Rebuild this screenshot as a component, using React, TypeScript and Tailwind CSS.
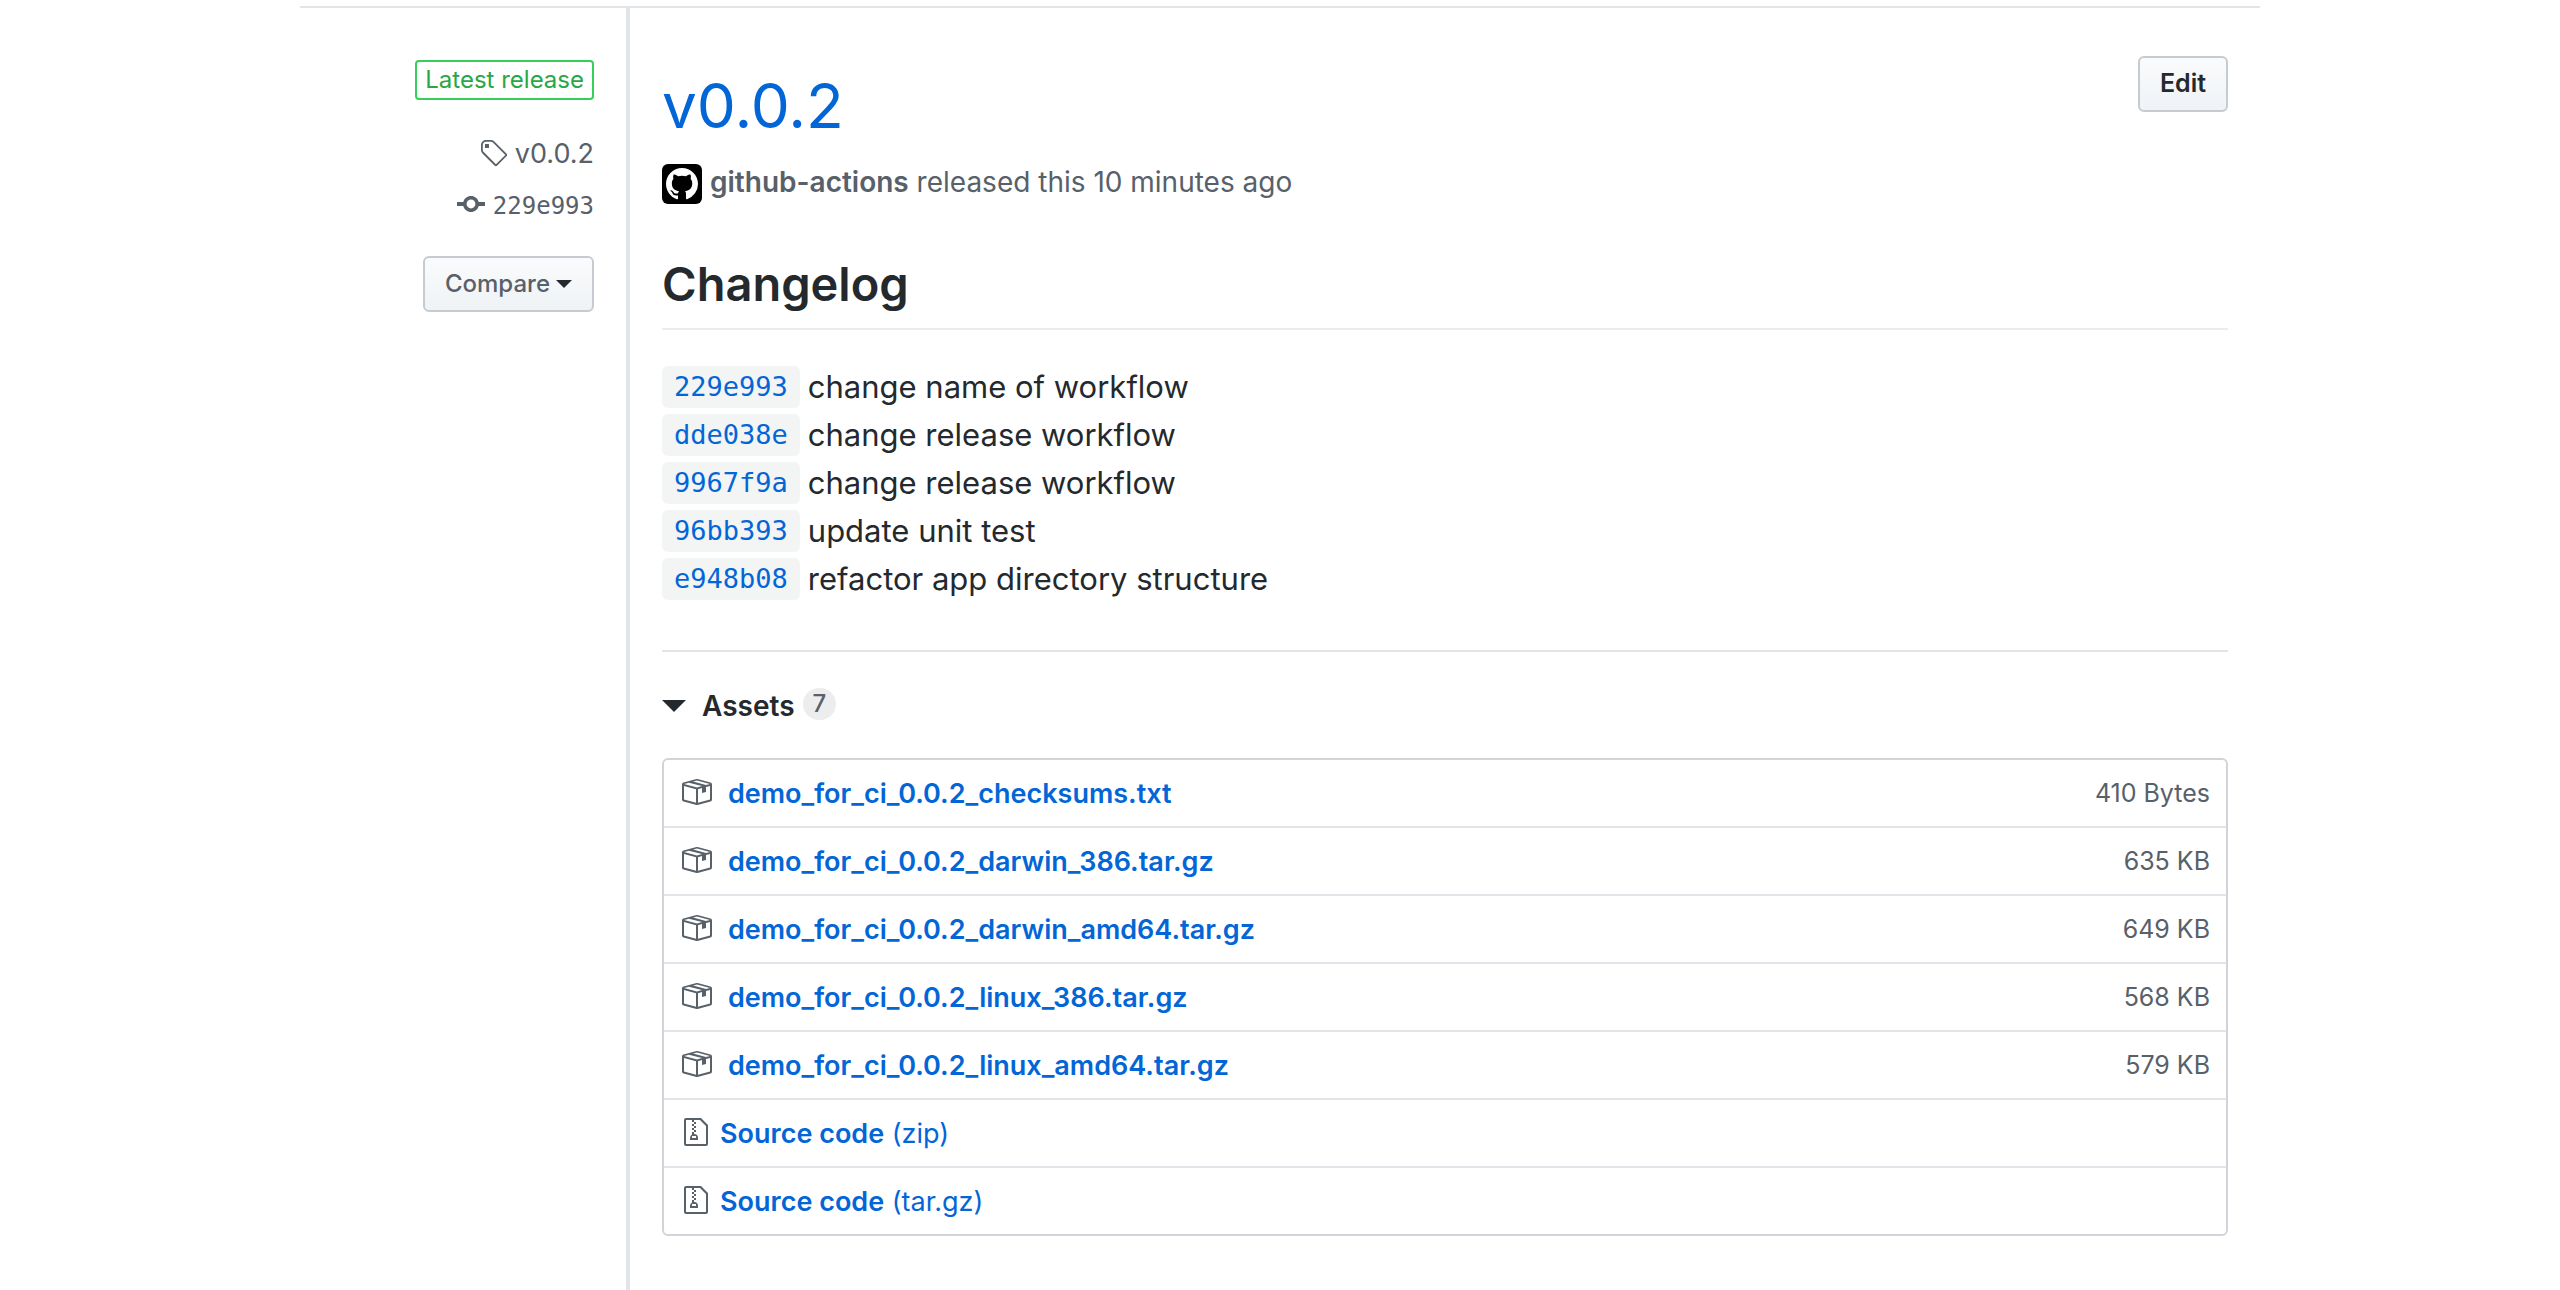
import { type ReactNode } from "react";

function Icon({ d, w, className }: { d: string; w: number; className: string }) {
  return (
    <svg viewBox={`0 0 ${w} 16`} fill="currentColor" aria-hidden="true" className={className}>
      <path fillRule="evenodd" d={d} />
    </svg>
  );
}

const TAG =
  "M7.685 1.72a2.49 2.49 0 0 0-1.76-.726H3.48A2.5 2.5 0 0 0 .994 3.48v2.456c0 .656.269 1.292.726 1.76l6.024 6.024a.99.99 0 0 0 1.402 0l4.563-4.563a.99.99 0 0 0 0-1.402L7.685 1.72zM2.366 7.048a1.54 1.54 0 0 1-.467-1.123V3.48c0-.874.716-1.58 1.58-1.58h2.456c.418 0 .825.159 1.123.467l6.104 6.094-4.702 4.702-6.094-6.114zm.626-4.066h1.989v1.989H2.982V2.982h.01z";
const COMMIT =
  "M10.86 7c-.45-1.72-2-3-3.86-3-1.86 0-3.41 1.28-3.86 3H0v2h3.14c.45 1.72 2 3 3.86 3 1.86 0 3.41-1.28 3.86-3H14V7h-3.14zM7 10.2c-1.22 0-2.2-.98-2.2-2.2 0-1.22.98-2.2 2.2-2.2 1.22 0 2.2.98 2.2 2.2 0 1.22-.98 2.2-2.2 2.2z";
const PACKAGE =
  "M1 4.27v7.47c0 .45.3.84.75.97l6.5 1.73c.16.05.34.05.5 0l6.5-1.73c.45-.13.75-.52.75-.97V4.27c0-.45-.3-.84-.75-.97l-6.5-1.74a1.4 1.4 0 0 0-.5 0L1.75 3.3c-.45.13-.75.52-.75.97zm7 9.09l-6-1.59V5l6 1.61v6.75zM2 4l2.5-.67L11 5.06l-2.5.67L2 4zm13 7.77l-6 1.59V6.61l2-.55V8.5l2-.53V5.53L15 5v6.77zm-2-7.24L6.5 2.8l2-.53L15 4l-2 .53z";
const ZIP =
  "M8.5 1H1a1 1 0 0 0-1 1v12a1 1 0 0 0 1 1h10a1 1 0 0 0 1-1V4.5L8.5 1zM11 14H1V2h3v1h1V2h3l3 3v9zM5 4V3h1v1H5zM4 4h1v1H4V4zm1 2V5h1v1H5zM4 6h1v1H4V6zm1 2V7h1v1H5zM4 9.28A2 2 0 0 0 3 11v1h4v-1a2 2 0 0 0-2-2V8H4v1.28zM6 10v1H4v-1h2z";
const MARK =
  "M8 0C3.58 0 0 3.58 0 8c0 3.54 2.29 6.53 5.47 7.59.4.07.55-.17.55-.38 0-.19-.01-.82-.01-1.49-2.01.37-2.53-.49-2.69-.94-.09-.23-.48-.94-.82-1.13-.28-.15-.68-.52-.01-.53.63-.01 1.08.58 1.23.82.72 1.21 1.87.87 2.33.66.07-.52.28-.87.51-1.07-1.78-.2-3.64-.89-3.64-3.95 0-.87.31-1.59.82-2.15-.08-.2-.36-1.02.08-2.12 0 0 .67-.21 2.2.82.64-.18 1.32-.27 2-.27.68 0 1.36.09 2 .27 1.53-1.04 2.2-.82 2.2-.82.44 1.1.16 1.92.08 2.12.51.56.82 1.27.82 2.15 0 3.07-1.87 3.75-3.65 3.95.29.25.54.73.54 1.48 0 1.07-.01 1.93-.01 2.2 0 .21.15.46.55.38A8.013 8.013 0 0 0 16 8c0-4.42-3.58-8-8-8z";

const commits = [
  ["229e993", "change name of workflow"],
  ["dde038e", "change release workflow"],
  ["9967f9a", "change release workflow"],
  ["96bb393", "update unit test"],
  ["e948b08", "refactor app directory structure"],
];

const files = [
  ["demo_for_ci_0.0.2_checksums.txt", "410 Bytes"],
  ["demo_for_ci_0.0.2_darwin_386.tar.gz", "635 KB"],
  ["demo_for_ci_0.0.2_darwin_amd64.tar.gz", "649 KB"],
  ["demo_for_ci_0.0.2_linux_386.tar.gz", "568 KB"],
  ["demo_for_ci_0.0.2_linux_amd64.tar.gz", "579 KB"],
];

function Button({ children, className }: { children: ReactNode; className: string }) {
  return (
    <button
      type="button"
      className={`flex h-14 shrink-0 items-center gap-1.5 rounded-md border-2 border-[#c6cbd1] bg-linear-to-b from-[#fafbfc] to-[#eff3f6] px-5 ${className}`}
    >
      {children}
    </button>
  );
}

function Sidebar() {
  return (
    <aside className="flex w-[330px] shrink-0 flex-col items-end border-r-4 border-[#e1e4e8] pt-[52px] pr-8 text-[#586069]">
      <a href="#latest" className="flex h-10 items-center rounded border-2 border-[#34d058] px-2 text-2xl text-[#28a745]">
        Latest release
      </a>
      <a href="#tag" className="mt-8 flex h-11 items-center gap-2 text-[27px]">
        <Icon d={TAG} w={14} className="h-8 w-7" />
        v0.0.2
      </a>
      <a href="#commit" className="mt-2 flex h-11 items-center gap-2 font-['DejaVu_Sans_Mono',monospace] text-2xl">
        <Icon d={COMMIT} w={14} className="mb-1 h-8 w-7" />
        229e993
      </a>
      <div className="mt-7">
        <Button className="text-2xl font-medium">
          <span className="text-[#586069]">Compare</span>
          <svg viewBox="0 0 16 8" aria-hidden="true" className="h-2 w-4 text-[#24292e]">
            <path fill="currentColor" d="M0 0h16L8 8z" />
          </svg>
        </Button>
      </div>
    </aside>
  );
}

function Assets() {
  return (
    <details open className="mt-[47px] border-t-2 border-[#e1e4e8] pt-8">
      <summary className="flex h-11 cursor-pointer list-none items-center">
        <svg viewBox="0 0 24 12" aria-hidden="true" className="h-3 w-6">
          <path fill="currentColor" d="M0 0h24L12 12z" />
        </svg>
        <span className="ml-4 text-[28px] font-semibold">Assets</span>
        <span className="mb-1 ml-2 flex h-8 items-center rounded-full bg-[#ededee] px-2.5 text-2xl font-medium text-[#586069]">7</span>
      </summary>
      <ul className="mt-[30px] divide-y-2 divide-[#e1e4e8] rounded-md border-2 border-[#d1d5da] text-[27px]">
        {files.map(([name, size]) => (
          <li key={name} className="flex h-[68px] items-center justify-between px-4 pt-0.5">
            <a href={`#${name}`} className="flex items-center gap-4 font-semibold text-[#0366d6]">
              <Icon d={PACKAGE} w={16} className="mb-1 size-8 text-[#586069]" />
              {name}
            </a>
            <small className="text-[25px] text-[#586069]">{size}</small>
          </li>
        ))}
        {["zip", "tar.gz"].map((kind) => (
          <li key={kind} className="flex h-[68px] items-center px-5 pt-0.5 last:h-[66px]">
            <a href={`#${kind}`} className="flex items-center gap-3 text-[#0366d6]">
              <Icon d={ZIP} w={12} className="mb-1 h-8 w-6 text-[#586069]" />
              <span>
                <strong className="font-semibold">Source code</strong> ({kind})
              </span>
            </a>
          </li>
        ))}
      </ul>
    </details>
  );
}

export default function App() {
  return (
    <div className="min-h-screen bg-white pt-1.5 font-[Inter,sans-serif] text-[#24292e]">
      <div className="mx-auto flex min-h-[calc(100vh-6px)] w-full max-w-[1960px] border-t-2 border-[#e1e4e8]">
        <Sidebar />
        <main className="min-w-0 flex-1 px-8 pt-12">
          <div className="flex items-start justify-between">
            <h1 className="pt-2.5 text-[62px] leading-[80px] text-[#0366d6]">
              <a href="#release">v0.0.2</a>
            </h1>
            <Button className="text-[25px] font-semibold">Edit</Button>
          </div>
          <p className="mt-[18px] flex items-center gap-2 text-[28px] leading-10 text-[#586069]">
            <span className="flex size-10 items-center justify-center rounded-md bg-black text-white">
              <Icon d={MARK} w={16} className="size-8" />
            </span>
            <span className="-mt-1 h-10">
              <a href="#author" className="font-semibold">github-actions</a> released this 10 minutes ago
            </span>
          </p>
          <h2 className="mt-[50px] border-b-2 border-[#eaecef] pb-3.5 text-[47px] leading-[60px] font-semibold">Changelog</h2>
          <ul className="mt-[33px] text-[31px] leading-[48px]">
            {commits.map(([hash, message]) => (
              <li key={hash} className="flex h-12 items-center gap-2">
                <a
                  href={`#${hash}`}
                  className="flex h-[42px] items-center rounded-md bg-[#f3f4f4] px-3 font-['DejaVu_Sans_Mono',monospace] text-[27px] text-[#0366d6]"
                >
                  {hash}
                </a>
                {message}
              </li>
            ))}
          </ul>
          <Assets />
        </main>
      </div>
    </div>
  );
}
